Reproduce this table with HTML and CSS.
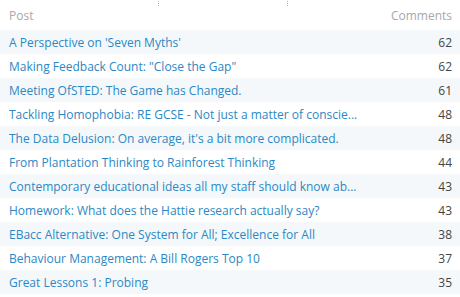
FILE: index.html
```html
<!DOCTYPE html>
<html lang="en">
<head>
<meta charset="utf-8">
<title>Top Posts</title>
<link rel="stylesheet" href="styles.css">
</head>
<body>
<div class="panel">
  <div class="guides">
    <span class="guide guide-a"></span>
    <span class="guide guide-b"></span>
  </div>
  <div class="table">
    <div class="row head">
      <span class="title">Post</span>
      <span class="count">Comments</span>
    </div>
    <div class="row"><a class="title" href="#">A Perspective on 'Seven Myths'</a><span class="count">62</span></div>
    <div class="row"><a class="title" href="#">Making Feedback Count: "Close the Gap"</a><span class="count">62</span></div>
    <div class="row"><a class="title" href="#">Meeting OfSTED: The Game has Changed.</a><span class="count">61</span></div>
    <div class="row"><a class="title" href="#">Tackling Homophobia: RE GCSE - Not just a matter of conscie...</a><span class="count">48</span></div>
    <div class="row"><a class="title" href="#">The Data Delusion: On average, it's a bit more complicated.</a><span class="count">48</span></div>
    <div class="row"><a class="title" href="#">From Plantation Thinking to Rainforest Thinking</a><span class="count">44</span></div>
    <div class="row"><a class="title" href="#">Contemporary educational ideas all my staff should know ab...</a><span class="count">43</span></div>
    <div class="row"><a class="title" href="#">Homework: What does the Hattie research actually say?</a><span class="count">43</span></div>
    <div class="row"><a class="title" href="#">EBacc Alternative: One System for All; Excellence for All</a><span class="count">38</span></div>
    <div class="row"><a class="title" href="#">Behaviour Management: A Bill Rogers Top 10</a><span class="count">37</span></div>
    <div class="row"><a class="title" href="#">Great Lessons 1: Probing</a><span class="count">35</span></div>
  </div>
</div>
</body>
</html>
```
FILE: styles.css
```css
html, body {
  margin: 0;
  padding: 0;
  background: #ffffff;
}

.panel {
  width: 460px;
  font-family: "Open Sans", "DejaVu Sans", sans-serif;
  font-size: 12px;
}

/* dotted column markers along the top edge */
.guides {
  position: relative;
  height: 0;
}

.guide {
  position: absolute;
  top: 0;
  width: 1px;
  height: 7px;
  background: repeating-linear-gradient(to bottom, #ffffff 0, #ffffff 1px, #7cb8e0 1px, #7cb8e0 2px);
}

.guide-a { left: 158px; }
.guide-b { left: 287px; }

.table {
  display: flex;
  flex-direction: column;
}

.row {
  display: flex;
  align-items: center;
  justify-content: space-between;
  height: 24px;
  padding: 0 8px 0 9px;
}

.row:nth-child(even) {
  background: #f4f8fa;
}

.row.head {
  height: 30px;
  align-items: flex-end;
  padding-bottom: 6px;
  box-sizing: border-box;
  color: #a8a8a8;
}

.title {
  color: #2b88c4;
  text-decoration: none;
  white-space: nowrap;
}

.head .title,
.head .count {
  color: #a8a8a8;
}

.count {
  color: #444444;
}
```
